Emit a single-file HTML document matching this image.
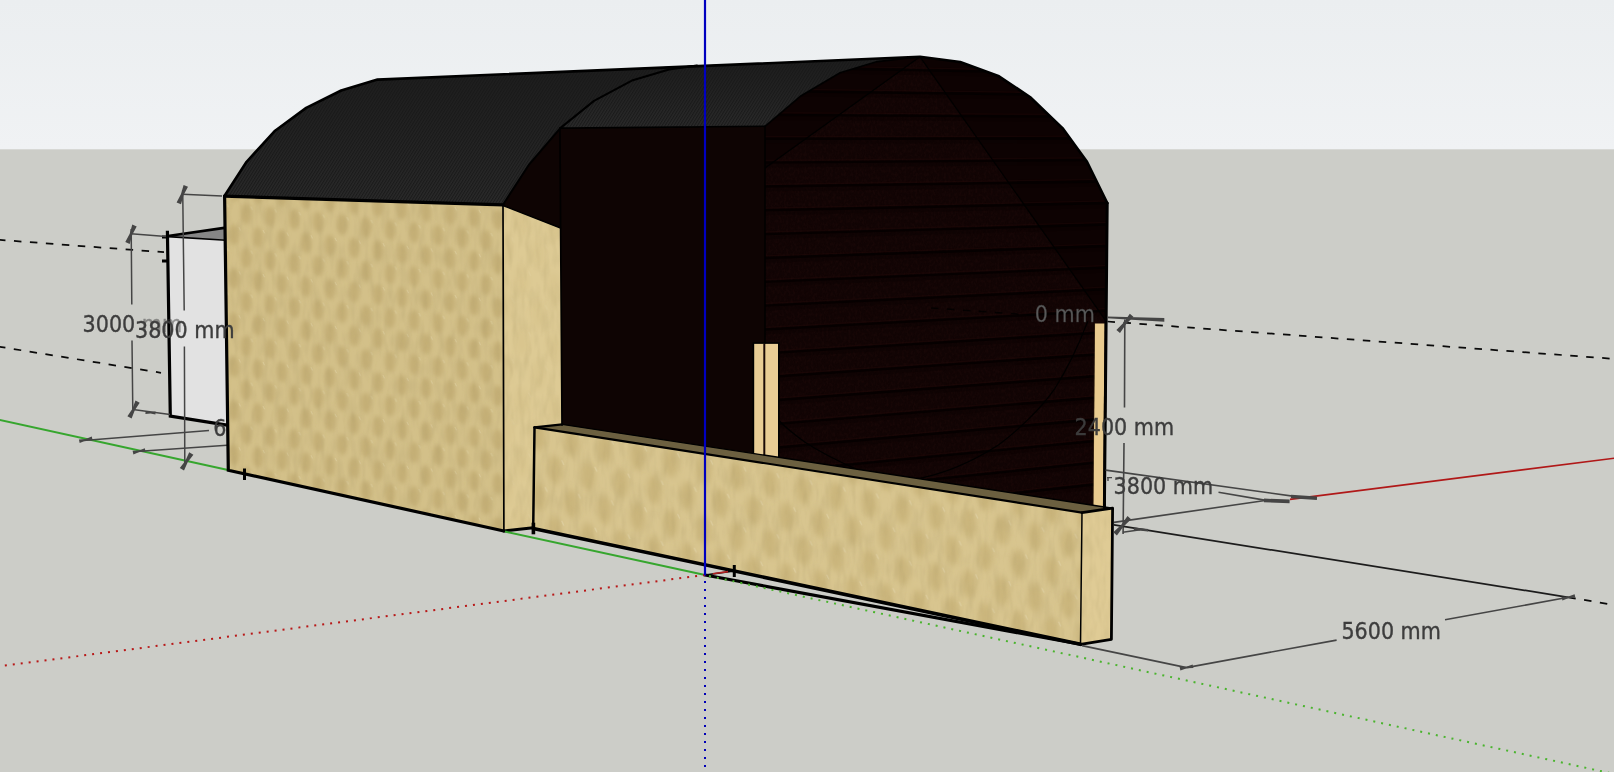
<!DOCTYPE html>
<html lang="en"><head><meta charset="utf-8"><title>SketchUp model view</title>
<style>
html,body{margin:0;padding:0;background:#cccdc8;overflow:hidden}
svg{display:block}
text{font-family:"DejaVu Sans Condensed","DejaVu Sans","Liberation Sans",sans-serif;font-stretch:condensed;font-size:23px;fill:#3c3c3c;stroke:#3c3c3c;stroke-width:0.35px}
</style></head><body>
<svg width="1614" height="772" viewBox="0 0 1614 772">
<defs>
<linearGradient id="sky" x1="0" y1="0" x2="0" y2="1"><stop offset="0" stop-color="#ebeef0"/><stop offset="1" stop-color="#f0f2f4"/></linearGradient>
<filter id="blur3" x="-30%" y="-30%" width="160%" height="160%"><feGaussianBlur stdDeviation="2.2"/></filter>
<filter id="grain" x="0" y="0" width="100%" height="100%"><feTurbulence type="fractalNoise" baseFrequency="0.16 0.045" numOctaves="2" seed="7" result="n"/><feColorMatrix in="n" type="matrix" values="0 0 0 0 0.42  0 0 0 0 0.33  0 0 0 0 0.14  0 0 0 0.5 -0.2" result="dk"/><feComposite in="dk" in2="SourceGraphic" operator="in"/></filter>
<filter id="woodn" x="0" y="0" width="100%" height="100%" color-interpolation-filters="sRGB"><feTurbulence type="fractalNoise" baseFrequency="0.45 0.3" numOctaves="2" seed="5" result="n"/><feColorMatrix in="n" type="matrix" values="0 0 0 0 0.15  0 0 0 0 0.05  0 0 0 0 0.045  0 0 0 0.8 -0.32" result="rd"/><feComposite in="rd" in2="SourceGraphic" operator="in"/></filter>
<pattern id="straw" width="24" height="44" patternUnits="userSpaceOnUse" patternTransform="matrix(1 0.11 0 1 0 0)"><rect width="24" height="44" fill="#d3c089"/><g fill="#c4af76" filter="url(#blur3)"><ellipse cx="6" cy="11" rx="5.2" ry="10.5"/><ellipse cx="18" cy="33" rx="5.2" ry="10.5"/><ellipse cx="30" cy="11" rx="5.2" ry="10.5"/><ellipse cx="-6" cy="33" rx="5.2" ry="10.5"/><ellipse cx="6" cy="55" rx="5.2" ry="10.5"/><ellipse cx="18" cy="-11" rx="5.2" ry="10.5"/></g><g stroke="#e3d6ac" stroke-width="0.9" opacity="0.6"><path d="M11 3 l1.6 3.2 M23 25 l1.6 3.2 M-1 25 l1.6 3.2"/></g></pattern>
<pattern id="straw2" width="24" height="44" patternUnits="userSpaceOnUse" patternTransform="matrix(1.38 0.28 0 1.38 0 8)"><rect width="24" height="44" fill="#d8c58f"/><g fill="#cab57b" filter="url(#blur3)"><ellipse cx="6" cy="11" rx="5.2" ry="10.5"/><ellipse cx="18" cy="33" rx="5.2" ry="10.5"/><ellipse cx="30" cy="11" rx="5.2" ry="10.5"/><ellipse cx="-6" cy="33" rx="5.2" ry="10.5"/><ellipse cx="6" cy="55" rx="5.2" ry="10.5"/><ellipse cx="18" cy="-11" rx="5.2" ry="10.5"/></g><g stroke="#e3d6ac" stroke-width="0.9" opacity="0.6"><path d="M11 3 l1.6 3.2 M23 25 l1.6 3.2 M-1 25 l1.6 3.2"/></g></pattern>
<pattern id="corr" width="2.5" height="2.5" patternUnits="userSpaceOnUse" patternTransform="rotate(-58)"><rect width="2.5" height="2.5" fill="#2b2b2b"/><rect width="2.5" height="1.1" fill="#1b1b1b"/></pattern>
<linearGradient id="roofshade2" gradientUnits="userSpaceOnUse" x1="0" y1="57" x2="0" y2="128"><stop offset="0" stop-color="#181818" stop-opacity="0.75"/><stop offset="0.5" stop-color="#181818" stop-opacity="0.4"/><stop offset="1" stop-color="#181818" stop-opacity="0"/></linearGradient>
<linearGradient id="roofshade" gradientUnits="userSpaceOnUse" x1="0" y1="60" x2="0" y2="205"><stop offset="0" stop-color="#181818" stop-opacity="0.75"/><stop offset="0.45" stop-color="#181818" stop-opacity="0.45"/><stop offset="1" stop-color="#181818" stop-opacity="0"/></linearGradient>
<clipPath id="clipEnd"><path id="endwallshape" d="M765.0 126.3 L801.2 95.7 L840.1 72.8 L877.3 61.6 L920.0 56.8 L960.2 62.0 L999.0 76.3 L1030.0 97.0 L1062.5 128.1 L1087.0 161.8 L1107.4 203.2 L1105.5 510.0 L765.0 460.0 Z"/></clipPath>
<clipPath id="clip0mm"><rect x="1035.6" y="296" width="80" height="34"/></clipPath>
</defs>
<rect width="1614" height="772" fill="#cccdc8"/>
<rect width="1614" height="149.3" fill="url(#sky)"/>
<g id="left-stuff">
<path d="M-2 239.8 L164 252.2" stroke="#0a0a0a" stroke-width="1.75" stroke-dasharray="7.5 8.5" fill="none"/>
<path d="M-2 346.5 L161 372.8" stroke="#0a0a0a" stroke-width="1.75" stroke-dasharray="7.5 8.5" fill="none"/>
<polygon points="167.6,236.5 226.0,240.0 227.5,427.5 170.3,416.0" fill="#e2e2e2"/>
<polygon points="167.8,236.5 226.0,228.2 226.0,240.0" fill="#868686"/>
<path d="M168 236.6 L226 240.2" stroke="#000" stroke-width="1.6" fill="none"/>
<path d="M168 236 L226 227.6" stroke="#000" stroke-width="2.6" fill="none"/>
<path d="M167.4 230.7 L170.3 416.2 L227 425.2" stroke="#000" stroke-width="3.2" fill="none" stroke-linejoin="miter"/>
<path d="M162 237.1 h5.5 M162 261 h5.5" stroke="#000" stroke-width="3"/>
<path d="M-2 419.6 L228 469.9" stroke="#36a62e" stroke-width="2" fill="none"/>
<g stroke="#454545" stroke-width="1.5" fill="none">
<path d="M83.7 440.4 L209 430.5"/>
<path d="M136.6 451.5 L227 445.2"/>
<path d="M133 409.6 L170 414.5"/>
<path d="M131.2 229 L131.8 304.5 M132 340.5 L132.8 411"/>
<path d="M131 233.8 L166 236.6"/>
<path d="M182.7 190 L184.2 310.5 M184.4 346.5 L184.8 463"/>
<path d="M182.6 194.3 L222 195.9"/>
</g>
<polygon points="129.7,243.9 132.3,234.8 136.7,226.4 132.3,224.6 129.7,233.7 125.3,242.1" fill="#454545" stroke="none"/>
<polygon points="181.0,204.2 183.6,195.1 188.0,186.7 183.6,184.9 181.0,194.0 176.6,202.4" fill="#454545" stroke="none"/>
<polygon points="131.6,418.5 134.8,410.2 139.7,402.8 135.5,400.6 132.3,408.9 127.4,416.3" fill="#454545" stroke="none"/>
<polygon points="184.0,470.5 187.8,462.1 193.4,454.7 189.2,452.3 185.4,460.7 179.8,468.1" fill="#454545" stroke="none"/>
<polygon points="79.7,443.0 85.9,440.6 92.6,440.2 91.8,436.6 85.6,439.0 78.9,439.4" fill="#454545" stroke="none"/>
<polygon points="133.4,454.4 139.3,452.1 145.6,451.8 144.8,448.2 138.9,450.5 132.6,450.8" fill="#454545" stroke="none"/>
<polygon points="145.4,413.9 150.5,413.4 155.4,414.5 155.6,411.5 150.5,412.0 145.6,410.9" fill="#454545" stroke="none"/>
<g opacity="0.99">
<text x="213.2" y="435.6">6000 mm</text>
<text x="82.6" y="332">3000<tspan opacity="0.5"> mm</tspan></text>
</g>
</g>
<g id="building" stroke-linejoin="round">
<polygon points="503.3,204.2 529.2,164.3 560.3,128.1 560.6,128.1 561.2,230.0 503.0,206.0" fill="#0e0403"/>
<polygon points="559.6,128.1 765.0,126.3 765.0,462.0 561.6,426.0" fill="#0e0403"/>
<polygon points="224.6,195.8 246.6,161.8 275.1,130.7 306.2,107.9 341.2,90.5 377.5,79.6 697.0,65.6 697.0,65.6 669.0,69.5 632.8,80.2 594.0,100.9 560.3,128.1 529.2,164.3 503.3,204.2" fill="url(#corr)"/>
<polygon points="224.6,195.8 246.6,161.8 275.1,130.7 306.2,107.9 341.2,90.5 377.5,79.6 697.0,65.6 697.0,65.6 669.0,69.5 632.8,80.2 594.0,100.9 560.3,128.1 529.2,164.3 503.3,204.2" fill="url(#roofshade)"/>
<polygon points="560.3,128.1 594.0,100.9 632.8,80.2 669.0,69.5 697.0,65.6 920.0,56.8 920.0,56.8 877.3,61.6 840.1,72.8 801.2,95.7 765.0,126.3" fill="url(#corr)"/>
<polygon points="560.3,128.1 594.0,100.9 632.8,80.2 669.0,69.5 697.0,65.6 920.0,56.8 920.0,56.8 877.3,61.6 840.1,72.8 801.2,95.7 765.0,126.3" fill="url(#roofshade2)"/>
<use href="#endwallshape" fill="#0d0202"/>
<g clip-path="url(#clipEnd)">
<polygon points="920.0,56.8 764.0,168.6 764.0,470.0 1109.0,520.0 1109.0,325.2" fill="#110404"/>
<polygon points="920.0,56.8 764.0,168.6 764.0,470.0 1109.0,520.0 1109.0,325.2" fill="#000" filter="url(#woodn)"/>
<path d="M764.0 67.2 L1110.0 73.9" stroke="#050000" stroke-width="2.4" opacity="0.9"/>
<path d="M764.0 65.0 L1110.0 71.7" stroke="#2a0c0b" stroke-width="1.2" opacity="0.28"/>
<path d="M764.0 70.2 L1110.0 76.9" stroke="#0a0202" stroke-width="4" opacity="0.35"/>
<path d="M764.0 91.1 L1110.0 95.4" stroke="#050000" stroke-width="2.4" opacity="0.9"/>
<path d="M764.0 88.9 L1110.0 93.2" stroke="#2a0c0b" stroke-width="1.2" opacity="0.28"/>
<path d="M764.0 94.1 L1110.0 98.4" stroke="#0a0202" stroke-width="4" opacity="0.35"/>
<path d="M764.0 114.9 L1110.0 116.9" stroke="#050000" stroke-width="2.4" opacity="0.9"/>
<path d="M764.0 112.7 L1110.0 114.7" stroke="#2a0c0b" stroke-width="1.2" opacity="0.28"/>
<path d="M764.0 117.9 L1110.0 119.9" stroke="#0a0202" stroke-width="4" opacity="0.35"/>
<path d="M764.0 138.8 L1110.0 138.4" stroke="#050000" stroke-width="2.4" opacity="0.9"/>
<path d="M764.0 136.6 L1110.0 136.2" stroke="#2a0c0b" stroke-width="1.2" opacity="0.28"/>
<path d="M764.0 141.8 L1110.0 141.4" stroke="#0a0202" stroke-width="4" opacity="0.35"/>
<path d="M764.0 162.6 L1110.0 159.9" stroke="#050000" stroke-width="2.4" opacity="0.9"/>
<path d="M764.0 160.4 L1110.0 157.7" stroke="#2a0c0b" stroke-width="1.2" opacity="0.28"/>
<path d="M764.0 165.6 L1110.0 162.9" stroke="#0a0202" stroke-width="4" opacity="0.35"/>
<path d="M764.0 186.5 L1110.0 181.4" stroke="#050000" stroke-width="2.4" opacity="0.9"/>
<path d="M764.0 184.3 L1110.0 179.2" stroke="#2a0c0b" stroke-width="1.2" opacity="0.28"/>
<path d="M764.0 189.5 L1110.0 184.4" stroke="#0a0202" stroke-width="4" opacity="0.35"/>
<path d="M764.0 210.3 L1110.0 203.0" stroke="#050000" stroke-width="2.4" opacity="0.9"/>
<path d="M764.0 208.1 L1110.0 200.8" stroke="#2a0c0b" stroke-width="1.2" opacity="0.28"/>
<path d="M764.0 213.3 L1110.0 206.0" stroke="#0a0202" stroke-width="4" opacity="0.35"/>
<path d="M764.0 234.2 L1110.0 224.5" stroke="#050000" stroke-width="2.4" opacity="0.9"/>
<path d="M764.0 232.0 L1110.0 222.3" stroke="#2a0c0b" stroke-width="1.2" opacity="0.28"/>
<path d="M764.0 237.2 L1110.0 227.5" stroke="#0a0202" stroke-width="4" opacity="0.35"/>
<path d="M764.0 258.0 L1110.0 246.0" stroke="#050000" stroke-width="2.4" opacity="0.9"/>
<path d="M764.0 255.8 L1110.0 243.8" stroke="#2a0c0b" stroke-width="1.2" opacity="0.28"/>
<path d="M764.0 261.0 L1110.0 249.0" stroke="#0a0202" stroke-width="4" opacity="0.35"/>
<path d="M764.0 281.9 L1110.0 267.5" stroke="#050000" stroke-width="2.4" opacity="0.9"/>
<path d="M764.0 279.7 L1110.0 265.3" stroke="#2a0c0b" stroke-width="1.2" opacity="0.28"/>
<path d="M764.0 284.9 L1110.0 270.5" stroke="#0a0202" stroke-width="4" opacity="0.35"/>
<path d="M764.0 305.7 L1110.0 289.0" stroke="#050000" stroke-width="2.4" opacity="0.9"/>
<path d="M764.0 303.5 L1110.0 286.8" stroke="#2a0c0b" stroke-width="1.2" opacity="0.28"/>
<path d="M764.0 308.7 L1110.0 292.0" stroke="#0a0202" stroke-width="4" opacity="0.35"/>
<path d="M764.0 329.6 L1110.0 310.5" stroke="#050000" stroke-width="2.4" opacity="0.9"/>
<path d="M764.0 327.4 L1110.0 308.3" stroke="#2a0c0b" stroke-width="1.2" opacity="0.28"/>
<path d="M764.0 332.6 L1110.0 313.5" stroke="#0a0202" stroke-width="4" opacity="0.35"/>
<path d="M764.0 353.4 L1110.0 332.1" stroke="#050000" stroke-width="2.4" opacity="0.9"/>
<path d="M764.0 351.2 L1110.0 329.9" stroke="#2a0c0b" stroke-width="1.2" opacity="0.28"/>
<path d="M764.0 356.4 L1110.0 335.1" stroke="#0a0202" stroke-width="4" opacity="0.35"/>
<path d="M764.0 377.3 L1110.0 353.6" stroke="#050000" stroke-width="2.4" opacity="0.9"/>
<path d="M764.0 375.1 L1110.0 351.4" stroke="#2a0c0b" stroke-width="1.2" opacity="0.28"/>
<path d="M764.0 380.3 L1110.0 356.6" stroke="#0a0202" stroke-width="4" opacity="0.35"/>
<path d="M764.0 401.1 L1110.0 375.1" stroke="#050000" stroke-width="2.4" opacity="0.9"/>
<path d="M764.0 398.9 L1110.0 372.9" stroke="#2a0c0b" stroke-width="1.2" opacity="0.28"/>
<path d="M764.0 404.1 L1110.0 378.1" stroke="#0a0202" stroke-width="4" opacity="0.35"/>
<path d="M764.0 425.0 L1110.0 396.6" stroke="#050000" stroke-width="2.4" opacity="0.9"/>
<path d="M764.0 422.8 L1110.0 394.4" stroke="#2a0c0b" stroke-width="1.2" opacity="0.28"/>
<path d="M764.0 428.0 L1110.0 399.6" stroke="#0a0202" stroke-width="4" opacity="0.35"/>
<path d="M764.0 448.8 L1110.0 418.1" stroke="#050000" stroke-width="2.4" opacity="0.9"/>
<path d="M764.0 446.6 L1110.0 415.9" stroke="#2a0c0b" stroke-width="1.2" opacity="0.28"/>
<path d="M764.0 451.8 L1110.0 421.1" stroke="#0a0202" stroke-width="4" opacity="0.35"/>
<path d="M764.0 472.7 L1110.0 439.6" stroke="#050000" stroke-width="2.4" opacity="0.9"/>
<path d="M764.0 470.5 L1110.0 437.4" stroke="#2a0c0b" stroke-width="1.2" opacity="0.28"/>
<path d="M764.0 475.7 L1110.0 442.6" stroke="#0a0202" stroke-width="4" opacity="0.35"/>
<path d="M764.0 496.5 L1110.0 461.2" stroke="#050000" stroke-width="2.4" opacity="0.9"/>
<path d="M764.0 494.3 L1110.0 459.0" stroke="#2a0c0b" stroke-width="1.2" opacity="0.28"/>
<path d="M764.0 499.5 L1110.0 464.2" stroke="#0a0202" stroke-width="4" opacity="0.35"/>
<path d="M764.0 520.4 L1110.0 482.7" stroke="#050000" stroke-width="2.4" opacity="0.9"/>
<path d="M764.0 518.2 L1110.0 480.5" stroke="#2a0c0b" stroke-width="1.2" opacity="0.28"/>
<path d="M764.0 523.4 L1110.0 485.7" stroke="#0a0202" stroke-width="4" opacity="0.35"/>
<path d="M764.0 544.2 L1110.0 504.2" stroke="#050000" stroke-width="2.4" opacity="0.9"/>
<path d="M764.0 542.0 L1110.0 502.0" stroke="#2a0c0b" stroke-width="1.2" opacity="0.28"/>
<path d="M764.0 547.2 L1110.0 507.2" stroke="#0a0202" stroke-width="4" opacity="0.35"/>
<g stroke="#000" stroke-width="1.2" fill="none">
<path d="M920 56.8 L764.6 168.2"/>
<path d="M920 56.8 L1106.6 321.8"/>
<path d="M1087.8 321.3 C1078 347 1066 371 1055 388.3 C1040 410 1016 432 998.4 445 C975 460 945 474 915 479.2"/>
<path d="M779 420.5 C786 428 795 435 804.7 442 C820 452 840 462 856 469"/>
</g>
</g>
<path d="M931 307.9 L1036 315.4" stroke="#000" stroke-width="1.5" stroke-dasharray="7.5 8.5" fill="none" opacity="0.8"/>
<g clip-path="url(#clip0mm)" opacity="0.99"><text x="995.3" y="322.1" style="fill:#5a5a5a">2400 mm</text></g>
<polygon points="754.0,343.6 778.2,343.6 778.2,462.0 754.0,458.0" fill="#e8cd95"/>
<path d="M764.3 343.5 V460" stroke="#1a0a06" stroke-width="2"/>
<path d="M753.4 343 V458 M778.8 343 V462 M752.6 343 H779.5" stroke="#000" stroke-width="1.6" fill="none"/>
<polygon points="1094.9,323.5 1104.6,323.5 1103.0,509.0 1093.3,507.0" fill="#e9cb8f"/>
<path d="M1094.6 323.5 L1093 507" stroke="#2a1a08" stroke-width="0.8" fill="none" opacity="0.7"/>
<polygon points="224.6,196.0 503.0,205.0 503.9,531.0 228.3,470.2" fill="url(#straw)"/>
<polygon points="224.6,196.0 503.0,205.0 503.9,531.0 228.3,470.2" fill="#000" filter="url(#grain)"/>
<polygon points="503.0,205.5 560.6,228.3 562.0,428.0 533.5,428.0 533.2,528.0 503.9,531.0" fill="#dfcc96"/>
<polygon points="503.0,205.5 560.6,228.3 562.0,428.0 533.5,428.0 533.2,528.0 503.9,531.0" fill="url(#straw2)" opacity="0.3"/>
<polygon points="503.0,205.5 560.6,228.3 562.0,428.0 533.5,428.0 533.2,528.0 503.9,531.0" fill="#000" filter="url(#grain)"/>
<polygon points="534.5,427.4 562.2,424.4 1112.6,508.2 1082.0,512.6" fill="#6c6040"/>
<polygon points="534.5,427.4 1082.0,512.6 1080.5,644.3 533.2,528.4" fill="url(#straw2)"/>
<polygon points="534.5,427.4 1082.0,512.6 1080.5,644.3 533.2,528.4" fill="#000" filter="url(#grain)"/>
<polygon points="1082.0,512.6 1112.6,508.2 1111.4,639.3 1080.5,644.3" fill="#dfcb95"/>
<polygon points="1082.0,512.6 1112.6,508.2 1111.4,639.3 1080.5,644.3" fill="#000" filter="url(#grain)"/>
<g fill="none" stroke="#000" stroke-linecap="round">
<path d="M224.6 195.8 L246.6 161.8 L275.1 130.7 L306.2 107.9 L341.2 90.5 L377.5 79.6 L920.0 56.8 L960.2 62.0 L999.0 76.3 L1030.0 97.0 L1062.5 128.1 L1087.0 161.8 L1107.4 203.2" stroke-width="2.6"/>
<path d="M1107.2 203 L1104.4 507" stroke-width="3"/>
<path d="M503.3 204.2 L529.2 164.3 L560.3 128.1 L594.0 100.9 L632.8 80.2 L669.0 69.5 L697.0 65.6" stroke-width="2"/>
<path d="M765.0 126.3 L801.2 95.7 L840.1 72.8 L877.3 61.6 L920.0 56.8" stroke-width="1.6"/>
<path d="M224.6 196.2 L503 204.8" stroke-width="3.2"/>
<path d="M560 128.1 L765 126.3" stroke-width="1.6"/>
<path d="M503 205.5 L560.6 228" stroke-width="1.5"/>
<path d="M559.9 128.1 L562 425" stroke-width="1.7"/>
<path d="M765 126.3 V343" stroke-width="1.5"/>
<path d="M503 205 L503.9 531" stroke-width="1.7"/>
<path d="M224.6 196 L228.3 470.2 L503.9 531" stroke-width="3.2" stroke-linejoin="miter"/>
<path d="M503.9 531 L533.2 527.8" stroke-width="3"/>
<path d="M534.5 427.4 L1082.0 512.6" stroke-width="2.1"/>
<path d="M534.5 427.4 L562.2 424.4" stroke-width="2.4"/>
<path d="M562.2 424.4 L1112.6 508.2" stroke-width="1.4"/>
<path d="M534.5 427.4 L533.2 528.4" stroke-width="2.5"/>
<path d="M1082.0 512.6 L1080.5 644.3" stroke-width="1.5"/>
<path d="M1082.0 512.6 L1112.6 508.2 L1111.4 639.3 L1080.5 644.3" stroke-width="2.8"/>
<path d="M533.2 528.4 L1080.5 644.3" stroke-width="3.6"/>
<path d="M705.0 575.0 L1080.5 644.3" stroke-width="3.2"/>
<path d="M705 575 L734.3 571" stroke-width="1.6"/>
<path d="M244.5 468.5 V480" stroke-width="3" stroke-linecap="butt"/>
<path d="M533.4 522.7 V534.3" stroke-width="3.6" stroke-linecap="butt"/>
<path d="M734.3 565 V577" stroke-width="3" stroke-linecap="butt"/>
</g>
</g>
<g id="axes" fill="none">
<path d="M505 531.6 L705 575" stroke="#36a62e" stroke-width="2"/>
<path d="M705 575 L-2 666.5" stroke="#b81818" stroke-width="2" stroke-dasharray="2 6"/>
<path d="M709 576 L1616 774.4" stroke="#4ab42e" stroke-width="2" stroke-dasharray="2 6"/>
<path d="M705 581 V774" stroke="#0000b8" stroke-width="2" stroke-dasharray="2 6"/>
<path d="M705 -1 V575.5" stroke="#0000c0" stroke-width="2.2"/>
<path d="M1290 499.3 L1616 458" stroke="#b01818" stroke-width="1.7"/>
<path d="M712.8 573.7 L728 571.6" stroke="#b02020" stroke-width="1.6"/>
</g>
<g id="right-dims" fill="none" stroke="#454545" stroke-width="1.6">
<path d="M1107.5 321.5 L1616 359" stroke="#0a0a0a" stroke-width="1.75" stroke-dasharray="7.5 8.5"/>
<path d="M1124.8 319.5 L1124.5 407.5 M1124 443 L1123.1 534"/>
<polygon points="1107,316.4 1164.3,318 1164.3,321.8 1107,318.2" fill="#454545" stroke="none"/>
<polygon points="1120.0,332.9 1126.0,324.2 1133.4,316.8 1129.8,313.8 1123.8,322.5 1116.4,329.9" fill="#454545" stroke="none"/>
<path d="M1105.6 470.1 L1296.3 496.6"/>
<path d="M1107 477.6 h5 M1108 477.6 v3.5" stroke-width="1.4"/>
<path d="M1218.5 492.3 L1266 500.4"/>
<path d="M1113.9 522.4 L1265.2 500.5"/>
<path d="M1291 496.5 L1317 498.2" stroke-width="3.6"/>
<path d="M1264 500.4 L1289.6 501.4" stroke-width="3.6"/>
<path d="M1113.9 524.8 L1568.3 597.3" stroke="#1c1c1c" stroke-width="1.7"/>
<path d="M1568.3 597.3 L1616 605.3" stroke="#0a0a0a" stroke-width="1.75" stroke-dasharray="7.5 8.5"/>
<polygon points="1116.9,535.5 1123.3,526.7 1131.1,519.3 1127.5,516.1 1121.1,524.9 1113.3,532.3" fill="#454545" stroke="none"/>
<path d="M1122.8 532.2 L1140.3 529.7" stroke-width="1.4"/>
<path d="M1133.9 528.7 L1148.1 530.2" stroke-width="2.6"/>
<path d="M1082 645.6 L1186.5 667.6"/>
<path d="M1186.5 667.6 L1336.6 640.1 M1445 619.8 L1568.3 597.3"/>
<polygon points="1180.4,670.6 1186.7,668.3 1193.4,668.0 1192.6,664.4 1186.3,666.7 1179.6,667.0" fill="#454545" stroke="none"/>
<polygon points="1562.4,600.4 1568.7,598.1 1575.4,597.8 1574.6,594.2 1568.3,596.5 1561.6,596.8" fill="#454545" stroke="none"/>
</g>
<g opacity="0.99">
<text x="1074.6" y="434.9">2400 mm</text>
<text x="1113.6" y="494">3800 mm</text>
<text x="1341.4" y="638.8">5600 mm</text>
<text x="135" y="338.2">3800 mm</text>
</g>
</svg></body></html>
